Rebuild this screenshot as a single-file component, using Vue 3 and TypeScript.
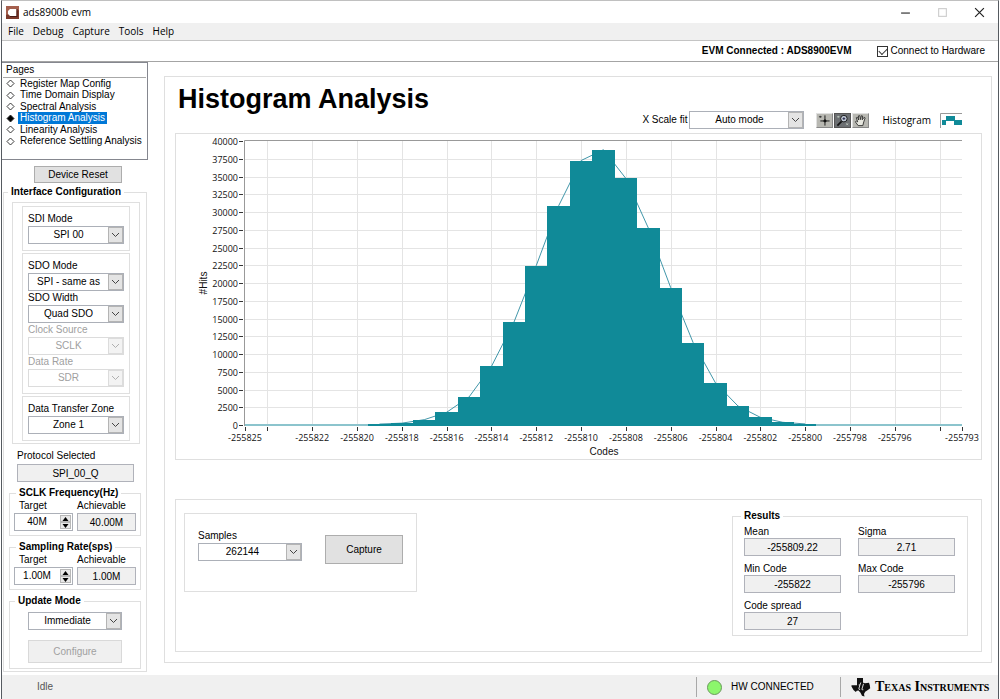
<script setup lang="ts">
import { computed, ref } from 'vue'

interface SelectField {
  id: string
  label: string
  value: string
  disabled?: boolean
}

const menus = ['File', 'Debug', 'Capture', 'Tools', 'Help']
const pages = [
  'Register Map Config',
  'Time Domain Display',
  'Spectral Analysis',
  'Histogram Analysis',
  'Linearity Analysis',
  'Reference Settling Analysis',
]
const activePage = ref('Histogram Analysis')
const connected = ref(true)

const interfaceGroups: SelectField[][] = [
  [{ id: 'sdi-mode', label: 'SDI Mode', value: 'SPI 00' }],
  [
    { id: 'sdo-mode', label: 'SDO Mode', value: 'SPI - same as' },
    { id: 'sdo-width', label: 'SDO Width', value: 'Quad SDO' },
    { id: 'clock-source', label: 'Clock Source', value: 'SCLK', disabled: true },
    { id: 'data-rate', label: 'Data Rate', value: 'SDR', disabled: true },
  ],
  [{ id: 'zone', label: 'Data Transfer Zone', value: 'Zone 1' }],
]

const rates = [
  { id: 'sclk', title: 'SCLK Frequency(Hz)', target: '40M', achievable: '40.00M' },
  { id: 'sampling', title: 'Sampling Rate(sps)', target: '1.00M', achievable: '1.00M' },
]

const results = [
  { id: 'mean', label: 'Mean', value: '-255809.22' },
  { id: 'sigma', label: 'Sigma', value: '2.71' },
  { id: 'min-code', label: 'Min Code', value: '-255822' },
  { id: 'max-code', label: 'Max Code', value: '-255796' },
  { id: 'spread', label: 'Code spread', value: '27' },
]

// Chart space: plot area inside an 805 x 325 drawing
const plot = { left: 69, right: 786, top: 7, bottom: 291 }
const firstCode = -255825
const lastCode = -255793
const maxHits = 40000

const hits: [number, number][] = [
  [-255819, 130], [-255818, 260], [-255817, 750], [-255816, 1790],
  [-255815, 3950], [-255814, 8260], [-255813, 14460], [-255812, 22460],
  [-255811, 30890], [-255810, 37250], [-255809, 38770], [-255808, 34720],
  [-255807, 27750], [-255806, 19340], [-255805, 11600], [-255804, 5915],
  [-255803, 2680], [-255802, 1080], [-255801, 380], [-255800, 150],
]

const step = (plot.right - plot.left) / (lastCode - firstCode)
const xOf = (code: number) => plot.left + (code - firstCode) * step
const yOf = (count: number) => plot.bottom - (count / maxHits) * (plot.bottom - plot.top)

const yTicks = Array.from({ length: 17 }, (_, i) => i * 2500)
const xTicks = [
  -255825, -255824, -255822, -255820, -255818, -255816, -255814, -255812, -255810,
  -255808, -255806, -255804, -255802, -255800, -255798, -255796, -255794, -255793,
]
const hasLabel = (code: number) => code !== -255824 && code !== -255794

const bars = computed(() =>
  hits.map(([code, count]) => ({
    code,
    x: Math.round(xOf(code - 0.5)),
    width: Math.round(xOf(code + 0.5)) - Math.round(xOf(code - 0.5)),
    y: Math.round(yOf(count)),
    height: plot.bottom + 1 - Math.round(yOf(count)),
  })),
)
const curve = computed(() => hits.map(([code, count]) => `${xOf(code)},${yOf(count)}`).join(' '))
</script>

<template>
  <div class="window">
    <header class="titlebar">
      <svg class="app-icon" viewBox="0 0 13 13" aria-hidden="true">
        <rect width="13" height="13" fill="#7c3a2c" />
        <path d="M0 0h13v4L0 9z" fill="#a5604e" />
        <path d="M4 3h6.500v7H4L2 8V5z" fill="#fff" />
        <path d="M10.500 3v7H4v1h7.500V3z" fill="#4a1a14" />
      </svg>
      <span class="app-name">ads8900b evm</span>
      <div class="window-buttons">
        <button type="button" aria-label="Minimize">
          <svg viewBox="0 0 10 10"><path d="M1 5.500h8" stroke="#222" /></svg>
        </button>
        <button type="button" aria-label="Maximize" disabled>
          <svg viewBox="0 0 10 10"><rect x="1.500" y="1.500" width="7" height="7" fill="none" stroke="#ccc" /></svg>
        </button>
        <button type="button" aria-label="Close">
          <svg viewBox="0 0 10 10"><path d="M1 1l8 8M9 1l-8 8" stroke="#222" stroke-width="1.100" /></svg>
        </button>
      </div>
    </header>

    <nav class="menubar" aria-label="Menu">
      <button v-for="menu in menus" :key="menu" type="button">{{ menu }}</button>
    </nav>

    <div class="statusline">
      <strong>EVM Connected : ADS8900EVM</strong>
      <label class="connect">
        <input v-model="connected" type="checkbox" />
        Connect to Hardware
      </label>
    </div>

    <div class="body">
      <aside class="sidebar">
        <nav class="pages" aria-label="Pages">
          <h2>Pages</h2>
          <ul>
            <li v-for="page in pages" :key="page">
              <svg viewBox="0 0 9 9" aria-hidden="true">
                <path d="M4.500 1L8 4.500 4.500 8 1 4.500z" :fill="page === activePage ? '#000' : '#fff'" stroke="#222" stroke-width="0.900" />
              </svg>
              <a href="#" :class="{ active: page === activePage }" @click.prevent="activePage = page">{{ page }}</a>
            </li>
          </ul>
        </nav>

        <button type="button" class="push reset">Device Reset</button>

        <fieldset class="config">
          <legend>Interface Configuration</legend>
          <div class="config-groups">
            <div v-for="(group, index) in interfaceGroups" :key="index" class="config-group">
              <div v-for="field in group" :key="field.id" class="field" :class="{ off: field.disabled }">
                <label :for="field.id">{{ field.label }}</label>
                <div class="select">
                  <select :id="field.id" :disabled="field.disabled"><option>{{ field.value }}</option></select>
                  <span class="arrow"><svg viewBox="0 0 9 6"><path d="M1 1l3.500 3.500L8 1" /></svg></span>
                </div>
              </div>
            </div>
          </div>

          <div class="field protocol">
            <label for="protocol">Protocol Selected</label>
            <input id="protocol" class="readout" type="text" value="SPI_00_Q" readonly />
          </div>

          <fieldset v-for="rate in rates" :key="rate.id" class="rate">
            <legend>{{ rate.title }}</legend>
            <div class="rate-fields">
              <div class="field">
                <label :for="rate.id + '-target'">Target</label>
                <div class="spin">
                  <input :id="rate.id + '-target'" type="text" :value="rate.target" />
                  <div class="spin-buttons">
                    <button type="button" aria-label="Increase"><svg viewBox="0 0 7 4"><path d="M3.500 0L6.500 4h-6z" /></svg></button>
                    <button type="button" aria-label="Decrease"><svg viewBox="0 0 7 4"><path d="M3.500 4L6.500 0h-6z" /></svg></button>
                  </div>
                </div>
              </div>
              <div class="field">
                <label :for="rate.id + '-achievable'">Achievable</label>
                <input :id="rate.id + '-achievable'" class="readout" type="text" :value="rate.achievable" readonly />
              </div>
            </div>
          </fieldset>

          <fieldset class="update">
            <legend>Update Mode</legend>
            <div class="update-fields">
              <div class="select">
                <select aria-label="Update Mode"><option>Immediate</option></select>
                <span class="arrow"><svg viewBox="0 0 9 6"><path d="M1 1l3.500 3.500L8 1" /></svg></span>
              </div>
              <button type="button" class="push configure" disabled>Configure</button>
            </div>
          </fieldset>
        </fieldset>
      </aside>

      <main class="main">
        <section class="page">
          <div class="page-head">
            <h1>Histogram Analysis</h1>
            <div class="toolbar">
              <label for="x-scale">X Scale fit</label>
              <div class="select scale">
                <select id="x-scale"><option>Auto mode</option></select>
                <span class="arrow"><svg viewBox="0 0 9 6"><path d="M1 1l3.500 3.500L8 1" /></svg></span>
              </div>
              <div class="tools">
                <button type="button" aria-label="Cursor">
                  <svg viewBox="0 0 16 14">
                    <path d="M8.500 1.500v11M3.500 7.500h10" stroke="#111" fill="none" />
                    <path d="M7 7.500h3M8.500 6v3" stroke="#111" stroke-width="2" />
                    <path d="M2 3h3M3.500 2v2" stroke="#333" />
                  </svg>
                </button>
                <button type="button" class="pressed" aria-label="Zoom">
                  <svg viewBox="0 0 16 14">
                    <circle cx="9.500" cy="5" r="3.500" fill="#c5cedb" stroke="#111" />
                    <path d="M8 5h3M9.500 3.500v3" stroke="#224" />
                    <path d="M7 8l-4.500 4.500" stroke="#111" stroke-width="1.800" />
                    <path d="M2 3h3M3.500 2v2M12 10l2 2M14 10l-2 2" stroke="#c8d4c8" stroke-width="0.800" />
                  </svg>
                </button>
                <button type="button" aria-label="Pan">
                  <svg viewBox="0 0 16 14">
                    <path d="M5.500 12.500L2.500 8.500 3.500 7.500 5 8.500 3.500 4 4.700 3.500 6.200 6.500 5.800 2 7.200 1.800 8 6 9 1.800 10.300 2.200 9.800 6.300 12 3.500 13 4.200 11.500 8.500 10.500 12.500z" fill="#e8e8e0" stroke="#222" stroke-width="0.900" />
                  </svg>
                </button>
              </div>
              <span class="legend-name">Histogram</span>
              <svg class="swatch" viewBox="0 0 22 15" aria-hidden="true">
                <path d="M.5 15V.500H22" fill="none" stroke="#999" />
                <path d="M2 7h4V3h9v4h7v5h-8V8H6v4H2z" fill="#108a98" />
              </svg>
            </div>
          </div>

          <div class="chart">
            <svg viewBox="0 0 805 325" role="img" aria-label="Histogram of codes">
              <g stroke="#e4e4e4">
                <line v-for="t in yTicks.slice(1, -1)" :key="t" :x1="plot.left" :x2="plot.right" :y1="Math.round(yOf(t)) + 0.5" :y2="Math.round(yOf(t)) + 0.5" />
                <line v-for="c in xTicks.slice(1, -1)" :key="c" :y1="plot.top" :y2="plot.bottom" :x1="Math.round(xOf(c)) + 0.5" :x2="Math.round(xOf(c)) + 0.5" />
              </g>
              <path :d="`M${plot.left - 0.5} ${plot.bottom + 1}V${plot.top - 0.5}H${plot.right}`" fill="none" stroke="#999" />
              <rect :x="plot.left" :y="plot.bottom - 1" :width="plot.right - plot.left" height="2" fill="#8cc4cd" />
              <polyline :points="curve" fill="none" stroke="#2c8ba0" stroke-width="0.900" />
              <rect v-for="b in bars" :key="b.code" :x="b.x" :y="b.y" :width="b.width" :height="b.height" fill="#108a98" />
              <g class="tick">
                <g v-for="t in yTicks" :key="t">
                  <line x1="63" x2="67" :y1="Math.round(yOf(t)) + 0.5" :y2="Math.round(yOf(t)) + 0.5" />
                  <text x="62" :y="Math.round(yOf(t)) + 4" text-anchor="end">{{ t }}</text>
                </g>
                <g v-for="c in xTicks" :key="c">
                  <line y1="293" y2="297" :x1="Math.round(xOf(c)) + 0.5" :x2="Math.round(xOf(c)) + 0.5" />
                  <text v-if="hasLabel(c)" :x="xOf(c)" y="307" text-anchor="middle">{{ c }}</text>
                </g>
              </g>
              <text class="axis-name" x="428" y="321" text-anchor="middle">Codes</text>
              <text class="axis-name" transform="translate(31 149) rotate(-90)" text-anchor="middle">#Hits</text>
            </svg>
          </div>

          <div class="lower">
            <div class="capture">
              <div class="field samples">
                <label for="samples">Samples</label>
                <div class="select">
                  <select id="samples"><option>262144</option></select>
                  <span class="arrow"><svg viewBox="0 0 9 6"><path d="M1 1l3.500 3.500L8 1" /></svg></span>
                </div>
              </div>
              <button type="button" class="push">Capture</button>
            </div>
            <fieldset class="results">
              <legend>Results</legend>
              <div class="results-grid">
                <div v-for="item in results" :key="item.id" class="result">
                  <label :for="item.id">{{ item.label }}</label>
                  <input :id="item.id" class="readout" type="text" :value="item.value" readonly />
                </div>
              </div>
            </fieldset>
          </div>
        </section>
      </main>
    </div>

    <footer class="footer">
      <span class="idle">Idle</span>
      <div class="hw"><span class="led"></span>HW CONNECTED</div>
      <div class="brand">
        <svg viewBox="0 0 20 20" aria-hidden="true">
          <path d="M6 1h6v4.500l2 .7 4-.4.800 2.400.400 3-2 1.500-3 2-1.200 2.300.5 2.500-2.500-.8-1.500-3-2-2.200-1.700.2-1 1.300L2.500 13 .5 9.500V8.300H6z" fill="#111" />
          <path d="M9.800 5.500L8.900 8H7.700M8.900 8l-1 3.500q-.2 1.200 1.200 1M12.500 6.800l-1.600 5.400q-.1.900 1.400.5" fill="none" stroke="#f0f0f0" stroke-width="0.900" />
          <circle cx="12.900" cy="5.100" r="0.700" fill="#f0f0f0" />
        </svg>
        <span>Texas Instruments</span>
      </div>
    </footer>
  </div>
</template>

<style>
body {
  margin: 0;
  background: #fff;
}
</style>

<style scoped>
.window,
.window * {
  box-sizing: border-box;
}
.window {
  display: flex;
  flex-direction: column;
  min-height: 100vh;
  margin: 0 1px;
  border: 1px solid #555a60;
  border-top-color: #c0c0c0;
  border-bottom-color: #a0a0a0;
  background: #fff;
  color: #000;
  font: 10px/12px "Liberation Sans", Arial, sans-serif;
}
button,
input,
select {
  margin: 0;
  padding: 0;
  border: 0;
  border-radius: 0;
  background: none;
  color: inherit;
  font: inherit;
}
fieldset {
  min-width: 0;
  margin: 0;
  padding: 0;
  border: 1px solid #dfdfdf;
}
legend {
  padding: 0 3px;
  font-weight: bold;
}

.titlebar {
  display: flex;
  align-items: center;
  height: 22px;
  padding: 0 4px;
}
.app-icon {
  width: 13px;
  height: 13px;
}
.app-name {
  margin-left: 4px;
  font: 10px/14px "Open Sans", "Noto Sans", sans-serif;
}
.window-buttons {
  display: flex;
  gap: 26px;
  margin-left: auto;
  padding-right: 9px;
}
.window-buttons button,
.window-buttons svg {
  display: block;
  width: 11px;
  height: 11px;
}

.menubar {
  display: flex;
  gap: 9px;
  height: 17px;
  padding: 0 6px 2px;
  background: #f0f0f0;
}
.menubar button {
  font: 10px/14px "Open Sans", "Noto Sans", sans-serif;
}

.statusline {
  display: flex;
  align-items: center;
  justify-content: flex-end;
  gap: 25px;
  height: 22px;
  padding-right: 13px;
  border-top: 1px solid #c4c4c4;
  border-bottom: 1px solid #a4a4a4;
}
.connect {
  display: flex;
  align-items: center;
  gap: 3px;
}
.connect input {
  appearance: none;
  width: 11px;
  height: 11px;
  border: 1px solid #333;
  background: #fff;
}
.connect input:checked::before {
  content: "";
  display: block;
  width: 7px;
  height: 4px;
  margin: 1px;
  border: solid #333;
  border-width: 0 0 1px 1px;
  transform: rotate(-45deg);
}

.body {
  display: flex;
  flex: 1;
}
.sidebar {
  display: flex;
  flex: none;
  flex-direction: column;
  width: 146px;
}
.pages {
  height: 98px;
  border: 1px solid #85878f;
  border-left: 0;
}
.pages h2 {
  height: 15px;
  margin: 0 1px;
  padding: 1px 3px 0;
  border-bottom: 1px solid #a8a8a8;
  font: inherit;
}
.pages ul {
  display: grid;
  grid-auto-rows: 1fr;
  height: 69px;
  margin: 0;
  padding: 0 4px;
  list-style: none;
}
.pages li {
  display: flex;
  align-items: center;
  gap: 3px;
  min-height: 0;
}
.pages svg {
  flex: none;
  width: 9px;
  height: 9px;
}
.pages a {
  padding: 0 2px;
  color: #000;
  text-decoration: none;
  white-space: nowrap;
}
.pages .active {
  background: #0078d7;
  color: #fff;
}

.push {
  border: 1px solid #adadad;
  background: #e1e1e1;
}
.push:disabled {
  border-color: #d9d9d9;
  background: #f0f0f0;
  color: #a0a0a0;
}
.reset {
  width: 88px;
  height: 17px;
  margin: 6px 0 3px 32px;
}

.config {
  margin: 0 1px;
  padding: 4px 5px 2px;
}
.config > legend {
  margin-left: -1px;
}
.config-groups {
  display: flex;
  flex-direction: column;
  gap: 2px;
  margin: 0 1px 0 3px;
  padding: 3px 9px 2px;
  border: 1px solid #dfdfdf;
}
.config-group {
  display: flex;
  flex-direction: column;
  gap: 1px;
  padding: 6px 5px;
  border: 1px solid #dfdfdf;
}
.field {
  display: flex;
  flex-direction: column;
  gap: 1px;
  min-width: 0;
}
.off label {
  color: #a0a0a0;
}

.select {
  position: relative;
  height: 18px;
  border: 1px solid #acb0b8;
  background: #fff;
}
.select select {
  appearance: none;
  display: block;
  width: 100%;
  height: 16px;
  padding: 0 16px 0 1px;
  text-align: center;
  text-align-last: center;
}
.select select:disabled {
  color: #a0a0a0;
  opacity: 1;
}
.arrow {
  position: absolute;
  top: 0;
  right: 0;
  display: flex;
  align-items: center;
  justify-content: center;
  width: 15px;
  height: 16px;
  border: 1px solid #b4b4b4;
  background: #e4e4e4;
  pointer-events: none;
}
.arrow svg {
  width: 9px;
  height: 6px;
}
.arrow path {
  fill: none;
  stroke: #444;
}
.off .select,
.off .arrow {
  border-color: #dcdcdc;
}
.off .arrow {
  background: #f3f3f3;
}
.off .arrow path {
  stroke: #b0b0b0;
}

.readout {
  width: 100%;
  height: 18px;
  border: 1px solid #b0b2ba;
  background: #f0f0f0;
  text-align: center;
}
.protocol {
  gap: 2px;
  margin: 6px 7px 5px 8px;
}
.rate {
  margin-bottom: 5px;
  padding: 1px 4px 4px;
}
.rate > legend {
  margin-left: 2px;
}
.rate-fields {
  display: grid;
  grid-template-columns: repeat(2, minmax(0, 1fr));
  gap: 4px;
}
.rate-fields label {
  padding-left: 5px;
}
.rate-fields .field + .field label {
  padding-left: 0;
}
.spin {
  display: flex;
  height: 18px;
  border: 1px solid #acb0b8;
  background: #fff;
}
.spin input {
  flex: 1;
  width: 100%;
  min-width: 0;
  text-align: center;
}
.spin-buttons {
  display: flex;
  flex: none;
  flex-direction: column;
  width: 11px;
  margin: 1px;
}
.spin-buttons button {
  display: flex;
  flex: 1;
  align-items: center;
  justify-content: center;
  border: 1px solid #b8b8b8;
  background: #e8e8e8;
}
.spin-buttons svg {
  flex: none;
  width: 7px;
  height: 4px;
}
.update > legend {
  margin-left: 5px;
}
.update-fields {
  display: flex;
  flex-direction: column;
  gap: 10px;
  padding: 5px 18px;
}
.configure {
  height: 23px;
}

.main {
  display: flex;
  flex: 1;
  min-width: 0;
  padding: 14px 6px 12px 16px;
}
.page {
  flex: 1;
  min-width: 0;
  padding: 0 9px 10px 10px;
  border: 1px solid #dfdfdf;
}
.page-head {
  display: flex;
  align-items: flex-end;
  justify-content: space-between;
  height: 56px;
  padding: 0 20px 4px 3px;
}
.page-head h1 {
  align-self: flex-start;
  margin: 7px 0 0;
  font-size: 27px;
  line-height: 30px;
  white-space: nowrap;
}
.toolbar {
  display: flex;
  align-items: center;
  white-space: nowrap;
}
.scale {
  width: 115px;
  margin: 0 12px 0 2px;
}
.tools {
  display: flex;
  gap: 1px;
}
.tools button {
  width: 17px;
  height: 15px;
  border: 1px solid;
  border-color: #e0e0e0 #888 #888 #e0e0e0;
  background: #b8b8b2;
}
.tools .pressed {
  border-color: #555;
  background: #6c6f72;
}
.tools svg {
  display: block;
  width: 15px;
  height: 13px;
}
.legend-name {
  margin: 0 9px 0 13px;
  font: 10px/14px "Open Sans", "Noto Sans", sans-serif;
}
.swatch {
  width: 22px;
  height: 15px;
}

.chart {
  border: 1px solid #dfdfdf;
}
.chart svg {
  display: block;
  width: 100%;
}
.tick line {
  stroke: #333;
}
.tick text {
  fill: #111;
  font: 9px "Open Sans", "Noto Sans", sans-serif;
}
.axis-name {
  fill: #111;
  font: 10px "Liberation Sans", Arial, sans-serif;
}

.lower {
  display: flex;
  align-items: flex-start;
  justify-content: space-between;
  min-height: 153px;
  margin-top: 39px;
  padding: 10px 13px 14px 8px;
  border: 1px solid #dfdfdf;
}
.capture {
  display: flex;
  align-items: flex-start;
  gap: 23px;
  margin-top: 3px;
  padding: 16px 13px 27px;
  border: 1px solid #dfdfdf;
}
.samples {
  width: 104px;
}
.capture .push {
  width: 78px;
  height: 29px;
  margin-top: 5px;
}
.results {
  padding: 4px 12px 5px 11px;
}
.results > legend {
  margin-left: -3px;
}
.results-grid {
  display: grid;
  grid-template-columns: 97px 97px;
  gap: 7px 17px;
}
.result {
  display: flex;
  flex-direction: column;
}

.footer {
  display: flex;
  height: 24px;
  align-items: center;
  background: #f0f0f0;
}
.idle {
  margin-right: auto;
  padding-left: 35px;
  color: #555;
}
.hw,
.brand {
  display: flex;
  align-items: center;
  height: 20px;
  border-left: 1px solid #a8a8a8;
}
.hw {
  gap: 9px;
  width: 144px;
  padding-left: 10px;
}
.led {
  width: 15px;
  height: 15px;
  border: 1px solid #6a9a5c;
  border-radius: 50%;
  background: #8cf66c;
}
.brand {
  gap: 4px;
  width: 158px;
  padding-left: 10px;
  font: bold 14px/16px "Liberation Serif", "Times New Roman", serif;
  font-variant: small-caps;
  white-space: nowrap;
}
.brand svg {
  flex: none;
  width: 20px;
  height: 20px;
}
</style>
